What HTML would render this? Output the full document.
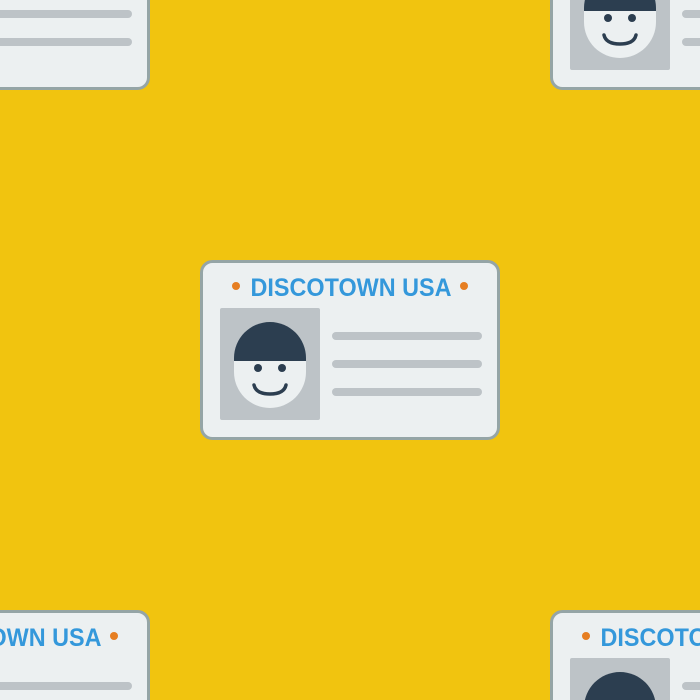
<!DOCTYPE html>
<html><head><meta charset="utf-8"><style>
html,body{margin:0;padding:0;width:700px;height:700px;overflow:hidden;background:#f1c40f}
svg{display:block;position:absolute;left:0;top:0}
</style></head><body>
<svg width="700" height="700" viewBox="0 0 700 700" xmlns="http://www.w3.org/2000/svg">
<rect width="700" height="700" fill="#f1c40f"/>
<defs>
<g id="card">
<rect x="201.5" y="261.5" width="297" height="177" rx="11" fill="#ecf0f1" stroke="#95a5a6" stroke-width="3"/>
<circle cx="236" cy="286" r="4" fill="#e67e22"/>
<circle cx="464" cy="286" r="4" fill="#e67e22"/>
<text x="351" y="296" text-anchor="middle" font-family="Liberation Sans, sans-serif" font-weight="bold" font-size="25" fill="#3498db" textLength="201" lengthAdjust="spacingAndGlyphs">DISCOTOWN USA</text>
<rect x="220" y="308" width="100" height="112" rx="2" fill="#bdc3c7"/>
<path d="M234 360 L234 372 A36 36 0 0 0 306 372 L306 360 Z" fill="#ecf0f1"/>
<path d="M234 361 L234 358 A36 36 0 0 1 306 358 L306 361 Z" fill="#2c3e50"/>
<circle cx="258" cy="368" r="4" fill="#2c3e50"/>
<circle cx="282" cy="368" r="4" fill="#2c3e50"/>
<path d="M254 385 Q256 394 270 394 Q284 394 286 385" fill="none" stroke="#2c3e50" stroke-width="3.5" stroke-linecap="round"/>
<g stroke="#bdc3c7" stroke-width="8" stroke-linecap="round">
<line x1="336" y1="336" x2="478" y2="336"/>
<line x1="336" y1="364" x2="478" y2="364"/>
<line x1="336" y1="392" x2="478" y2="392"/>
</g>
</g>
</defs>
<use href="#card"/>
<use href="#card" transform="translate(-350,-350)"/>
<use href="#card" transform="translate(350,-350)"/>
<use href="#card" transform="translate(-350,350)"/>
<use href="#card" transform="translate(350,350)"/>
</svg>
</body></html>
